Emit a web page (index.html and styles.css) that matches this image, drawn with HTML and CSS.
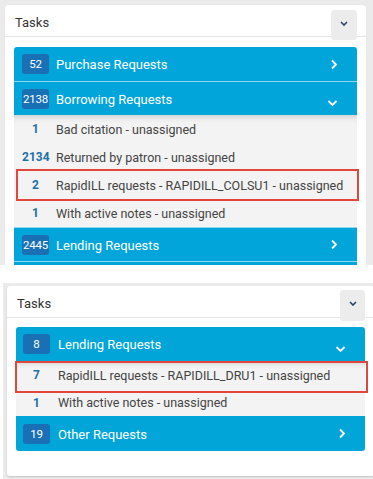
FILE: index.html
```html
<!DOCTYPE html>
<html>
<head>
<meta charset="utf-8">
<link rel="stylesheet" href="styles.css">
</head>
<body>
<div class="shot shot-a">
  <div class="panel">
    <div class="panel-head">
      <span class="panel-title">Tasks</span>
      <span class="toggle"><svg width="8" height="5" viewBox="0 0 8 5"><path d="M1 1l3 3 3-3" fill="none" stroke="#2b3d6e" stroke-width="1.6"/></svg></span>
    </div>
    <div class="groups">
      <div class="group-row first">
        <span class="badge">52</span><span class="group-name">Purchase Requests</span>
        <svg class="chev" width="8" height="11" viewBox="0 0 8 11"><path d="M2 1.5l4 4-4 4" fill="none" stroke="#fff" stroke-width="1.8"/></svg>
      </div>
      <div class="group-row">
        <span class="badge">2138</span><span class="group-name">Borrowing Requests</span>
        <svg class="chev" width="11" height="8" viewBox="0 0 11 8"><path d="M1.5 2l4 4 4-4" fill="none" stroke="#fff" stroke-width="1.8"/></svg>
      </div>
      <div class="items">
        <div class="item"><span class="num">1</span><span class="label">Bad citation - unassigned</span></div>
        <div class="item"><span class="num">2134</span><span class="label">Returned by patron - unassigned</span></div>
        <div class="item mark mark-a"><span class="num">2</span><span class="label">RapidILL requests - RAPIDILL_COLSU1 - unassigned</span></div>
        <div class="item"><span class="num">1</span><span class="label">With active notes - unassigned</span></div>
      </div>
      <div class="group-row">
        <span class="badge">2445</span><span class="group-name">Lending Requests</span>
        <svg class="chev" width="8" height="11" viewBox="0 0 8 11"><path d="M2 1.5l4 4-4 4" fill="none" stroke="#fff" stroke-width="1.8"/></svg>
      </div>
      <div class="group-row"></div>
    </div>
  </div>
</div>

<div class="shot shot-b">
  <div class="panel panel-b">
    <div class="panel-head">
      <span class="panel-title">Tasks</span>
      <span class="toggle toggle-b"><svg width="8" height="5" viewBox="0 0 8 5"><path d="M1 1l3 3 3-3" fill="none" stroke="#2b3d6e" stroke-width="1.6"/></svg></span>
    </div>
    <div class="groups groups-b">
      <div class="group-row first">
        <span class="badge">8</span><span class="group-name">Lending Requests</span>
        <svg class="chev chev-down-b" width="11" height="8" viewBox="0 0 11 8"><path d="M1.5 2l4 4 4-4" fill="none" stroke="#fff" stroke-width="1.8"/></svg>
      </div>
      <div class="items">
        <div class="item mark mark-b"><span class="num">7</span><span class="label">RapidILL requests - RAPIDILL_DRU1 - unassigned</span></div>
        <div class="item short"><span class="num">1</span><span class="label">With active notes - unassigned</span></div>
      </div>
      <div class="group-row last">
        <span class="badge">19</span><span class="group-name">Other Requests</span>
        <svg class="chev" width="8" height="11" viewBox="0 0 8 11"><path d="M2 1.5l4 4-4 4" fill="none" stroke="#fff" stroke-width="1.8"/></svg>
      </div>
    </div>
  </div>
</div>
</body>
</html>
```
FILE: styles.css
```css
* { box-sizing: border-box; }
html, body { margin: 0; padding: 0; background: #fff; }
body {
  width: 373px;
  height: 479px;
  overflow: hidden;
  font-family: Roboto, "Liberation Sans", sans-serif;
}

.shot {
  background: #ebebeb;
  overflow: hidden;
}
.shot-a {
  height: 265px;
  padding: 5px 7px 0 5px;
}
.shot-b {
  margin-top: 18px;
  margin-left: 3px;
  height: 196px;
  padding: 3px 0 0 4px;
}

.panel {
  background: #fff;
  border-radius: 3px;
  box-shadow: 0 0 1px rgba(0,0,0,0.12);
}
.panel-b {
  width: 367px;
  height: 190px;
  box-shadow: 0 1px 2px rgba(0,0,0,0.18);
}

.panel-head {
  height: 32px;
  border-bottom: 1px solid #e6e6e6;
  display: flex;
  justify-content: space-between;
  align-items: flex-start;
  padding: 0 9px 0 10px;
}
.panel-title {
  font-size: 13px;
  color: #333;
  line-height: 14px;
  margin-top: 11px;
}
.toggle {
  width: 26px;
  height: 30px;
  margin-top: 5px;
  background: #ececec;
  border-radius: 3px;
  display: flex;
  align-items: center;
  justify-content: center;
  position: relative;
}
.toggle svg { margin-top: -4px; }
.toggle-b {
  width: 25px;
  height: 31px;
  margin-top: 4px;
}

.groups {
  margin: 10px 9px 0 9px;
}
.groups-b { margin-top: 9px; }

.group-row {
  height: 34px;
  background: #02a5d9;
  display: flex;
  align-items: center;
  padding: 0 19px 0 8px;
  color: #fff;
  border-top: 1px solid #8fd9f2;
}
.group-row.first {
  border-top: none;
  border-radius: 3px 3px 0 0;
}
.group-row.last {
  border-radius: 0 0 3px 3px;
  height: 35px;
}
.groups-b .group-row { padding-left: 7px; background: #02a5d8; }
.groups-b .group-row.last { border-top: none; }

.badge {
  width: 27px;
  height: 20px;
  border-radius: 3px;
  background: #1a70b4;
  color: #fff;
  font-size: 11.5px;
  display: flex;
  align-items: center;
  justify-content: center;
  letter-spacing: -0.2px;
  flex: none;
}
.group-name {
  margin-left: 7px;
  font-size: 13px;
  flex: 1;
  margin-top: 1px;
}
.groups-b .group-name { margin-left: 8px; }
.chev { flex: none; }
.chev-down-b { margin-top: 10px; }
.group-row:nth-child(2) .chev { margin-top: 8px; }

.items {
  background: #f3f3f3;
  box-shadow: inset 0 7px 6px -5px rgba(0,0,0,0.16);
}
.item {
  height: 28px;
  display: flex;
  align-items: center;
  padding-left: 8px;
  position: relative;
}
.item.short { height: 27px; }
.groups-b .item { padding-left: 7px; }
.num {
  width: 27px;
  text-align: center;
  color: #1d6fa8;
  font-weight: bold;
  font-size: 12px;
  flex: none;
}
.label {
  margin-left: 7px;
  font-size: 12.5px;
  color: #444;
}
.groups-b .label { margin-left: 8px; }

.mark::after {
  content: "";
  position: absolute;
  border: 2px solid #e2453b;
  pointer-events: none;
}
.mark-a::after { left: 2px; right: -2px; top: -2px; bottom: -2px; }
.mark-b::after { left: -1px; right: -3px; top: 0; bottom: -4px; }
```
